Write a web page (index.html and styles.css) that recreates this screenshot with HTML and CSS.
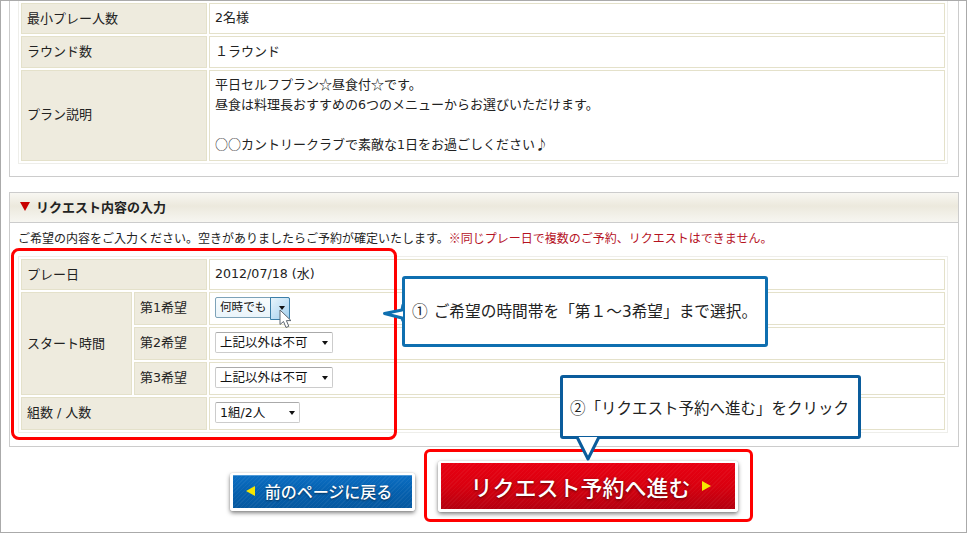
FILE: index.html
```html
<!DOCTYPE html>
<html lang="ja">
<head>
<meta charset="utf-8">
<title>リクエスト内容の入力</title>
<link rel="stylesheet" href="styles.css">
</head>
<body>
<div class="frame">
  <section class="panel panel-top">
    <table class="grid">
      <colgroup><col class="c-wide"><col class="c-val"></colgroup>
      <tr class="r31"><th>最小プレー人数</th><td><span class="num">2</span>名様</td></tr>
      <tr class="r32"><th>ラウンド数</th><td>１ラウンド</td></tr>
      <tr class="r90"><th>プラン説明</th><td class="desc">平日セルフプラン☆昼食付☆です。<br>昼食は料理長おすすめの<span class="num">6</span>つのメニューからお選びいただけます。<br><br>○○カントリークラブで素敵な<span class="num">1</span>日をお過ごしください♪</td></tr>
    </table>
  </section>

  <section class="panel panel-form">
    <h2 class="panel-head"><span class="tri-down"></span>リクエスト内容の入力</h2>
    <p class="lead">ご希望の内容をご入力ください。空きがありましたらご予約が確定いたします。<span class="warn">※同じプレー日で複数のご予約、リクエストはできません。</span></p>
    <table class="grid">
      <colgroup><col class="c-a"><col class="c-b"><col class="c-val"></colgroup>
      <tr class="r31"><th colspan="2">プレー日</th><td><span class="num">2012/07/18 (</span>水<span class="num">)</span></td></tr>
      <tr class="r33"><th rowspan="3">スタート時間</th><th>第<span class="num">1</span>希望</th><td>
        <span class="sel sel-hot"><select aria-label="第1希望"><option>何時でも</option></select></span></td></tr>
      <tr class="r33"><th>第<span class="num">2</span>希望</th><td>
        <span class="sel sel-wide"><select aria-label="第2希望"><option>上記以外は不可</option></select></span></td></tr>
      <tr class="r33"><th>第<span class="num">3</span>希望</th><td>
        <span class="sel sel-wide"><select aria-label="第3希望"><option>上記以外は不可</option></select></span></td></tr>
      <tr class="r33"><th colspan="2">組数<span class="num"> / </span>人数</th><td>
        <span class="sel sel-mid"><select aria-label="組数 / 人数"><option>1組/2人</option></select></span></td></tr>
    </table>
  </section>

  <div class="actions">
    <a class="btn btn-back"><span class="btn-in"><span class="tri-left"></span>前のページに戻る</span></a>
    <a class="btn btn-next"><span class="btn-in">リクエスト予約へ進む<span class="tri-right"></span></span></a>
  </div>

  <div class="mark mark-form"></div>
  <div class="mark mark-next"></div>

  <div class="callout callout-one">
    <p class="callout-text"><span class="circled">①</span>ご希望の時間帯を「第１～<span class="num">3</span>希望」まで選択。</p>
    <svg class="tail tail-left" width="22" height="22" viewBox="0 0 22 22"><path d="M21 2.5 L20 8 L2.5 11.5 L20 16 L21 19" fill="#fff" stroke="#0f6fb0" stroke-width="3" stroke-linejoin="round"/></svg>
  </div>
  <div class="callout callout-two">
    <p class="callout-text">②「リクエスト予約へ進む」をクリック</p>
    <svg class="tail tail-down" width="26" height="26" viewBox="0 0 26 26"><path d="M2 1 L13 23 L24 1" fill="#fff" stroke="#0a5c9c" stroke-width="3" stroke-linejoin="round"/></svg>
  </div>

  <svg class="pointer" width="14" height="21" viewBox="0 0 14 21"><path d="M1 1 L1 15.5 L4.5 12.5 L7 18.5 L9.8 17.3 L7.4 11.6 L12 11.6 Z" fill="#fff" stroke="#5d6670" stroke-width="1"/></svg>
</div>
</body>
</html>
```
FILE: styles.css
```css
* { box-sizing: border-box; }
html, body { margin: 0; padding: 0; background: #fff; }
body {
  font-family: "Noto Sans CJK JP", "Liberation Sans", sans-serif;
  color: #222;
  font-size: 13px;
}
.num { font-family: "DejaVu Sans", sans-serif; font-size: 0.97em; }
.frame {
  position: relative;
  width: 967px;
  height: 533px;
  border: 1px solid #aaa;
  overflow: hidden;
  background: #fff;
}
.panel {
  width: 950px;
  margin-left: 8px;
  border: 1px solid #ccc;
  padding: 0 8px;
}
.panel-top {
  border-top: 0;
  height: 176px;
}
.panel-form {
  margin-top: 15px;
  height: 255px;
}
.grid {
  width: 930px;
  table-layout: fixed;
  border-collapse: separate;
  border-spacing: 2px;
  border: 1px solid #eeeeea;
}
.panel-top .grid { border-top: 0; }
.c-wide { width: 186px; }
.c-a { width: 111px; }
.c-b { width: 73px; }
.grid th, .grid td {
  border: 1px solid #e4e1ca;
  padding: 0 5px 2px;
  font-size: 13px;
  line-height: 19.5px;
  font-weight: 400;
  text-align: left;
  vertical-align: middle;
}
.grid th { background: #eeebde; }
.grid td { background: #fff; }
.grid td.desc { padding-top: 3px; padding-bottom: 6px; }
.grid .r90 th { padding-bottom: 4px; }
.r31 { height: 31px; }
.r32 { height: 32px; }
.r33 { height: 33px; }
.r90 { height: 90px; }

.panel-head {
  display: flex;
  align-items: center;
  height: 30px;
  margin: 0 -8px;
  padding: 0 0 3px 10px;
  font-size: 13px;
  font-weight: 700;
  color: #222;
  border-bottom: 1px solid #ccc;
  background: linear-gradient(#f8f7f2 0, #ece9dd 45%, #f7f6f1 100%);
}
.tri-down {
  width: 0;
  height: 0;
  margin-right: 6px;
  border-left: 5px solid transparent;
  border-right: 5px solid transparent;
  border-top: 9px solid #c80000;
}
.lead {
  margin: 0;
  height: 33px;
  padding-top: 6px;
  font-size: 12px;
  line-height: 18px;
  white-space: nowrap;
}
.warn { color: #b5121f; }

.sel {
  position: relative;
  display: inline-block;
  height: 21px;
  vertical-align: middle;
}
.sel select {
  display: block;
  width: 100%;
  height: 100%;
  appearance: none;
  -webkit-appearance: none;
  margin: 0;
  padding: 0 0 0 4px;
  font: 12.5px/19px "DejaVu Sans", "Noto Sans CJK JP", sans-serif;
  color: #111;
  background: #fff;
  border: 1px solid #ccc;
  border-top-color: #aaa;
  border-radius: 2px;
}
.sel::after {
  content: "";
  position: absolute;
  top: 9px;
  right: 5px;
  border-left: 3.5px solid transparent;
  border-right: 3.5px solid transparent;
  border-top: 4px solid #111;
}
.sel-hot { width: 75px; }
.sel-wide { width: 118px; }
.sel-mid { width: 85px; }
.sel-hot select {
  font-size: 11.6px;
  border-color: #7da2b8;
  background: linear-gradient(#f8fcfe, #eaf4fa);
}
.sel-hot::before {
  content: "";
  position: absolute;
  top: 0;
  right: 0;
  width: 18px;
  height: 21px;
  border: 1px solid #3c7fa8;
  border-radius: 0 2px 2px 0;
  background: linear-gradient(135deg, #e8f4fb, #a3d0ee);
}

.actions {
  display: flex;
  justify-content: center;
  align-items: flex-end;
  gap: 23px;
  margin-top: 14px;
}
.btn {
  display: block;
  border: 3px solid #fff;
  border-top-width: 2px;
  border-radius: 3px;
  color: #fff;
  box-shadow: 0 2px 4px rgba(0, 0, 0, .5), 0 0 1px rgba(0, 0, 0, .3);
}
.btn-in {
  display: flex;
  align-items: center;
  justify-content: center;
  height: 100%;
}
.btn-back {
  width: 185px;
  height: 38px;
  margin-bottom: 1px;
  font-size: 16px;
  font-weight: 500;
  text-shadow: 0 1px 2px rgba(0, 0, 0, .5);
}
.btn-back .btn-in {
  padding: 0 6px 2px 0;
  background:
    repeating-linear-gradient(135deg, rgba(255, 255, 255, .05) 0 1px, transparent 1px 3px),
    linear-gradient(#0a6cc0 0, #0a6cc0 6%, #0560ae 50%, #05589f 100%);
  border-top: 1px solid #4f9ad8;
}
.btn-next {
  width: 300px;
  height: 51px;
  font-size: 22px;
  font-weight: 500;
  text-shadow: 0 1px 3px rgba(60, 0, 0, .8);
}
.btn-next .btn-in {
  padding: 0 0 1px 6px;
  background:
    repeating-linear-gradient(135deg, rgba(255, 255, 255, .04) 0 1px, transparent 1px 3px),
    linear-gradient(#e80012 0, #d9000f 50%, #b40010 100%);
}
.tri-left {
  width: 0;
  height: 0;
  margin-right: 10px;
  border-top: 5px solid transparent;
  border-bottom: 5px solid transparent;
  border-right: 9px solid #f5e600;
}
.tri-right {
  width: 0;
  height: 0;
  margin-left: 11px;
  border-top: 5px solid transparent;
  border-bottom: 5px solid transparent;
  border-left: 9px solid #f5e600;
}

.mark {
  position: absolute;
  border: 3px solid #f00;
}
.mark-form {
  left: 10px;
  top: 247px;
  width: 386px;
  height: 192px;
  border-radius: 8px;
}
.mark-next {
  left: 423px;
  top: 448px;
  width: 329px;
  height: 73px;
  border-radius: 6px;
}
.callout {
  position: absolute;
  display: flex;
  align-items: center;
  background: #fff;
  border-radius: 3px;
  color: #222;
}
.callout-text {
  margin: 0;
  white-space: nowrap;
}
.circled { margin-right: 6px; }
.callout-one {
  left: 401px;
  top: 275px;
  width: 366px;
  height: 71px;
  padding: 0 0 2px 7px;
  font-size: 15.7px;
  border: 3px solid #0f6fb0;
}
.callout-two {
  left: 559px;
  top: 374px;
  width: 301px;
  height: 64px;
  padding-left: 7px;
  font-size: 15.5px;
  border: 3px solid #0a5c9c;
}
.tail { position: absolute; overflow: visible; }
.tail-left { left: -23px; top: 23px; }
.tail-down { left: 12px; top: 58px; }
.pointer { position: absolute; left: 278px; top: 308px; }
```
